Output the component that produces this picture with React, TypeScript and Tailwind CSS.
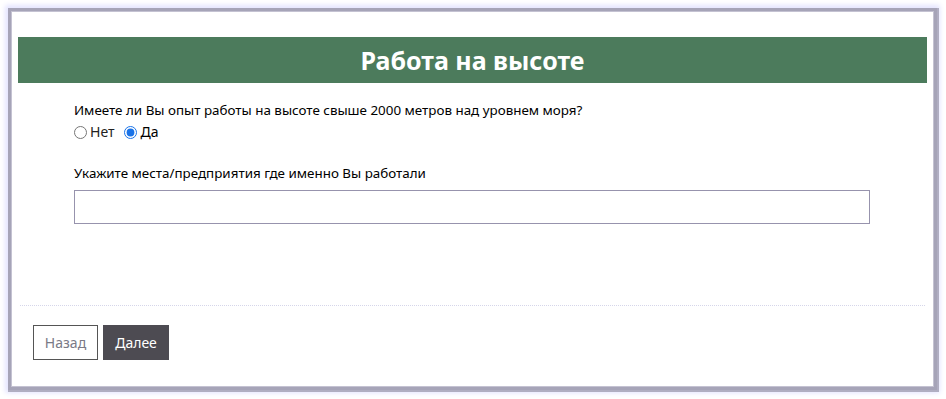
import { useState } from 'react';

export default function App() {
  const [hasExperience, setHasExperience] = useState<'no' | 'yes'>('yes');
  const [places, setPlaces] = useState('');

  return (
    <div className="min-h-screen bg-white pl-[12px] pt-[12px] font-['Noto_Sans',sans-serif] text-black">
      <div className="w-[921px] h-[374px] bg-white flex flex-col shadow-[0_0_0_1px_#c4c2d2,0_0_0_4px_#a6a4b8,1px_1px_0_5px_#b0aec2,0_0_5px_7px_#e4e4ff]">
        <div className="mx-[6px] mt-[25px] h-[46px] bg-[#4c7b5c] flex items-center justify-center">
          <h1 className="text-[25px] font-bold text-white leading-none">Работа на высоте</h1>
        </div>

        <div className="pl-[62px] pr-[63px] pt-[17px] text-[13.4px] leading-[20px]">
          <p>Имеете ли Вы опыт работы на высоте свыше 2000 метров над уровнем моря?</p>
          <div className="flex items-center mt-[2px] h-[20px] text-[14px]">
            <label className="flex items-center gap-[3px]">
              <input
                type="radio"
                name="experience"
                className="m-0 w-[13px] h-[13px] accent-[#1a73e8]"
                checked={hasExperience === 'no'}
                onChange={() => setHasExperience('no')}
              />
              <span className="text-[#222]">Нет</span>
            </label>
            <label className="flex items-center gap-[4px] ml-[9px]">
              <input
                type="radio"
                name="experience"
                className="m-0 w-[13px] h-[13px] accent-[#1a73e8]"
                checked={hasExperience === 'yes'}
                onChange={() => setHasExperience('yes')}
              />
              <span>Да</span>
            </label>
          </div>

          <p className="mt-[21px]">Укажите места/предприятия где именно Вы работали</p>
          <input
            type="text"
            value={places}
            onChange={(e) => setPlaces(e.target.value)}
            className="mt-[7px] block w-[796px] h-[34px] border border-[#9793ad] px-2 outline-none"
          />
        </div>

        <div className="mt-auto mx-[8px] border-t border-dotted border-[#d6d6ea]" />
        <div className="flex gap-[5px] pl-[21px] pt-[19px] pb-[26px] text-[14px]">
          <button className="w-[65px] h-[35px] border border-[#555] bg-white text-[#7a7a86]">Назад</button>
          <button className="w-[66px] h-[35px] bg-[#4d4b52] text-white">Далее</button>
        </div>
      </div>
    </div>
  );
}
